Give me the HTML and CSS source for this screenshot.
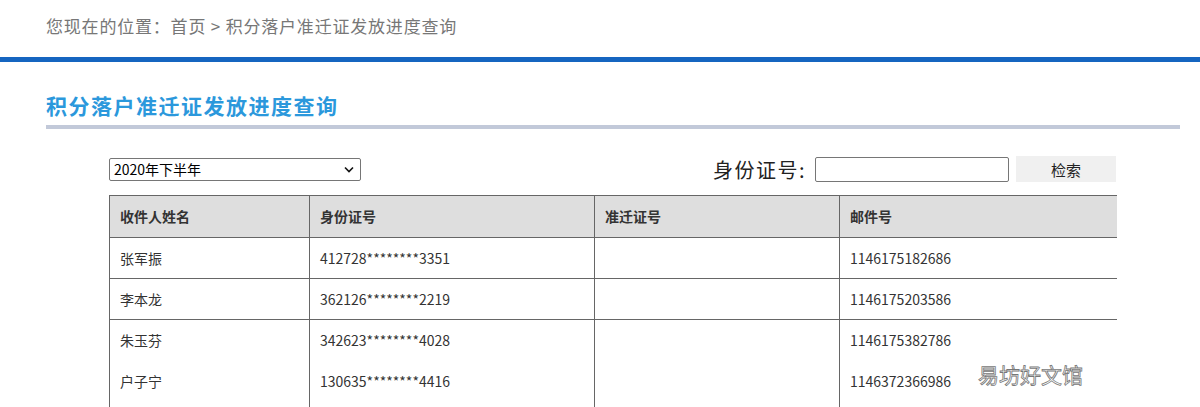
FILE: index.html
```html
<!DOCTYPE html>
<html lang="zh-CN">
<head>
<meta charset="utf-8">
<title>积分落户准迁证发放进度查询</title>
<link rel="stylesheet" href="styles.css">
</head>
<body>
<div class="crumb">您现在的位置：首页 &gt; 积分落户准迁证发放进度查询</div>
<div class="bluebar"></div>
<div class="titlewrap">
  <h1 class="title">积分落户准迁证发放进度查询</h1>
</div>
<div class="content">
  <div class="toolbar">
    <div class="selectbox"><span>2020年下半年</span><svg class="chev" width="10" height="7" viewBox="0 0 10 7"><path d="M1 1.5 L5 5.5 L9 1.5" fill="none" stroke="#111" stroke-width="1.6"/></svg></div>
    <div class="search">
      <span class="label">身份证号:</span>
      <div class="input"></div>
      <div class="btn">检索</div>
    </div>
  </div>
  <table class="grid">
    <colgroup><col class="c1"><col class="c2"><col class="c3"><col class="c4"></colgroup>
    <thead>
      <tr><th>收件人姓名</th><th>身份证号</th><th>准迁证号</th><th>邮件号</th></tr>
    </thead>
    <tbody>
      <tr><td>张军振</td><td>412728********3351</td><td></td><td>1146175182686</td></tr>
      <tr><td>李本龙</td><td>362126********2219</td><td></td><td>1146175203586</td></tr>
      <tr class="multi"><td>朱玉芬<br>户子宁</td><td>342623********4028<br>130635********4416</td><td></td><td>1146175382786<br>1146372366986</td></tr>
    </tbody>
  </table>
  <div class="mark">易坊好文馆</div>
</div>
</body>
</html>
```
FILE: styles.css
```css
html, body {
  margin: 0;
  padding: 0;
  background: #fff;
  font-family: "Noto Sans CJK SC", "Microsoft YaHei", sans-serif;
  overflow: hidden;
}
.crumb {
  height: 57px;
  box-sizing: border-box;
  padding: 14px 0 0 46px;
  font-size: 17px;
  line-height: 24px;
  letter-spacing: 0.8px;
  color: #777;
}
.bluebar {
  height: 5px;
  background: #1565c0;
}
.titlewrap {
  margin: 0 20px 0 46px;
  padding-top: 27px;
  border-bottom: 4px solid #c2c9d9;
}
.title {
  margin: 0;
  font-size: 21px;
  line-height: 32px;
  padding-bottom: 4px;
  font-weight: bold;
  color: #2b98dc;
  letter-spacing: 1.5px;
}
.content {
  position: relative;
  margin: 0 0 0 109px;
  width: 1007px;
}
.toolbar {
  display: flex;
  justify-content: space-between;
  align-items: center;
  padding-top: 27px;
  height: 26px;
  margin-bottom: 13px;
}
.selectbox {
  width: 252px;
  height: 23px;
  box-sizing: border-box;
  border: 1px solid #767676;
  border-radius: 2px;
  display: flex;
  align-items: center;
  justify-content: space-between;
  padding: 0 6px 0 4px;
  font-size: 14px;
  color: #000;
}
.search {
  display: flex;
  align-items: center;
}
.label {
  font-size: 20px;
  color: #222;
  letter-spacing: 1.5px;
  margin-right: 9px;
}
.input {
  width: 194px;
  height: 25px;
  box-sizing: border-box;
  border: 1px solid #767676;
  border-radius: 2px;
  margin-right: 7px;
}
.btn {
  width: 100px;
  height: 26px;
  background: #f0f0f0;
  font-size: 15px;
  color: #222;
  display: flex;
  align-items: center;
  justify-content: center;
}
.grid {
  border-collapse: collapse;
  table-layout: fixed;
  width: 1007px;
  font-size: 14px;
  color: #333;
}
.c1 { width: 200px; }
.c2 { width: 285px; }
.c3 { width: 245px; }
.c4 { width: 277px; }
.grid th, .grid td {
  border: 1px solid #666;
  text-align: left;
  padding: 0 10px;
  line-height: 40px;
  font-weight: normal;
}
.grid th {
  background: #dedede;
  font-weight: bold;
  line-height: 41px;
}
.grid tr > :last-child {
  border-right: none;
}
.grid tr.multi td {
  vertical-align: top;
  line-height: 41px;
  height: 120px;
}
.mark {
  position: absolute;
  left: 869px;
  top: 230px;
  font-size: 21px;
  color: #fff;
  -webkit-text-stroke: 0.8px #777;
}
```
